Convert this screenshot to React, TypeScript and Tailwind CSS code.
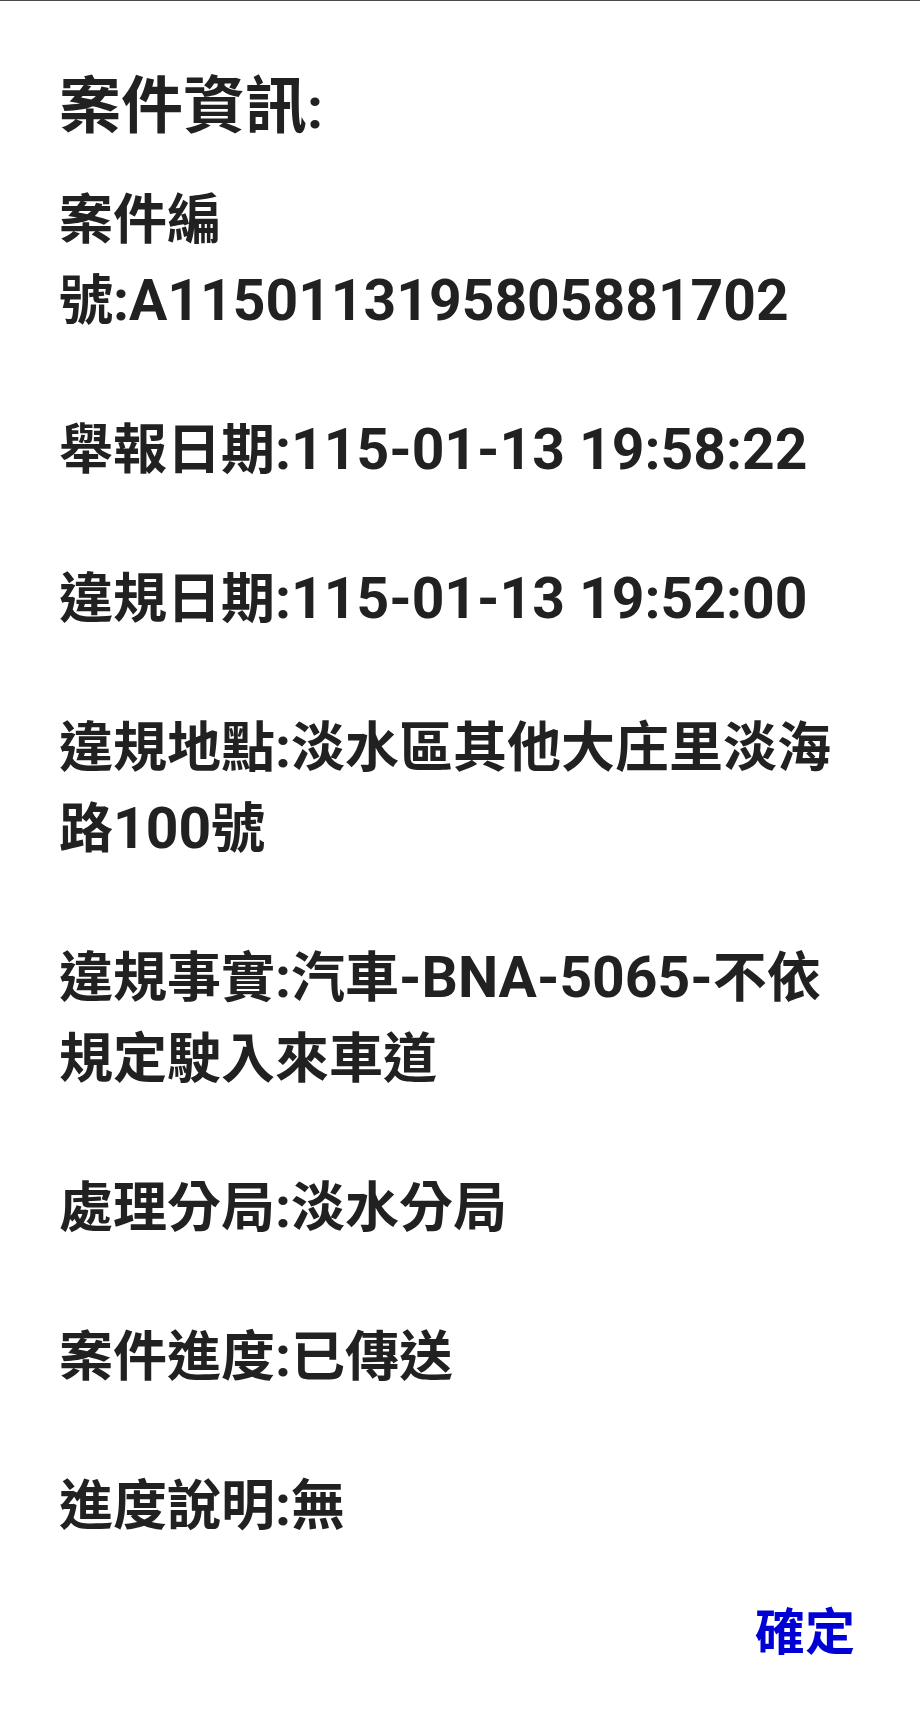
const FIELDS = [
  '案件編號:A1150113195805881702',
  '舉報日期:115-01-13 19:58:22',
  '違規日期:115-01-13 19:52:00',
  '違規地點:淡水區其他大庄里淡海路100號',
  '違規事實:汽車-BNA-5065-不依規定駛入來車道',
  '處理分局:淡水分局',
  '案件進度:已傳送',
  '進度說明:無',
];

// latin runs come out a bit larger than the CJK glyphs in the reference
function Mixed({ text }: { text: string }) {
  const parts = text.split(/([\x20-\x7e]+)/).filter(Boolean);
  return (
    <>
      {parts.map((p, i) =>
        /^[\x20-\x7e]+$/.test(p) ? (
          <span key={i} className="text-[57px] leading-none">
            {p}
          </span>
        ) : (
          <span key={i}>{p}</span>
        ),
      )}
    </>
  );
}

export default function App() {
  return (
    <div className="w-[920px] h-[1714px] bg-white border-t border-[#4a4a4a] text-[#212121] font-bold font-['Roboto','Noto_Sans_CJK_TC',sans-serif]">
      <div className="w-[862px] pl-[59px] pt-[66px]">
        <h2 className="text-[62px] leading-[80px]">
          <Mixed text="案件資訊:" />
        </h2>
        <div className="mt-[33px] flex flex-col gap-[68px]">
          {FIELDS.map((f) => (
            <p key={f} className="text-[54px] leading-[81px] break-words">
              <Mixed text={f} />
            </p>
          ))}
        </div>
      </div>
      <div className="flex justify-end pr-[65px] mt-[56px]">
        <button type="button" className="text-[50px] leading-[60px] font-bold text-[#0000d4]">
          確定
        </button>
      </div>
    </div>
  );
}
